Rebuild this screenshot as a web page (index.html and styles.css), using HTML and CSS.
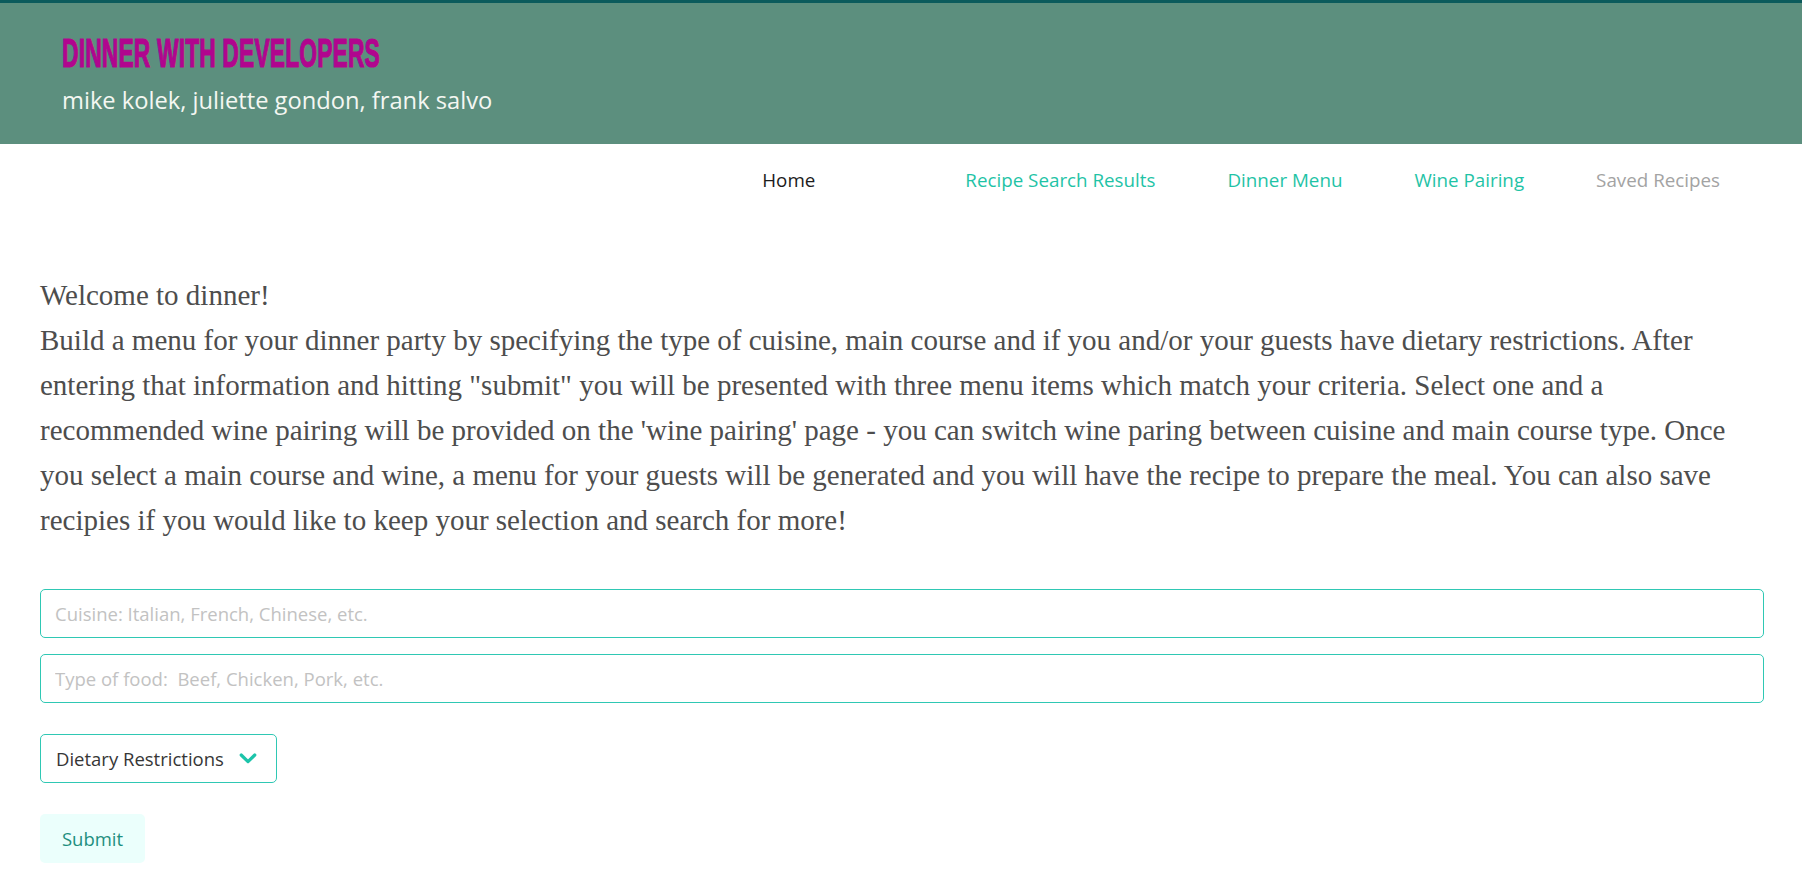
FILE: index.html
```html
<!DOCTYPE html>
<html lang="en">
<head>
<meta charset="utf-8">
<title>Dinner with Developers</title>
<link rel="stylesheet" href="styles.css">
</head>
<body>
<header class="hero">
  <h1 class="title"><span class="title-text">DINNER WITH DEVELOPERS</span></h1>
  <p class="subtitle">mike kolek, juliette gondon, frank salvo</p>
</header>
<nav class="navbar">
  <a class="nav-item nav-home" href="#">Home</a>
  <a class="nav-item nav-link" href="#">Recipe Search Results</a>
  <a class="nav-item nav-link" href="#">Dinner Menu</a>
  <a class="nav-item nav-link" href="#">Wine Pairing</a>
  <a class="nav-item nav-muted" href="#">Saved Recipes</a>
</nav>
<main class="content">
  <p class="intro">Welcome to dinner!<br>Build a menu for your dinner party by specifying the type of cuisine, main course and if you and/or your guests have dietary restrictions. After<br>entering that information and hitting "submit" you will be presented with three menu items which match your criteria. Select one and a<br>recommended wine pairing will be provided on the 'wine pairing' page - you can switch wine paring between cuisine and main course type. Once<br>you select a main course and wine, a menu for your guests will be generated and you will have the recipe to prepare the meal. You can also save<br>recipies if you would like to keep your selection and search for more!</p>
  <form class="search-form">
    <div class="fields">
      <input class="input" type="text" placeholder="Cuisine: Italian, French, Chinese, etc.">
      <input class="input" type="text" placeholder="Type of food:  Beef, Chicken, Pork, etc.">
    </div>
    <div class="dropdown">
      <button class="dropdown-button" type="button">
        <span class="dropdown-label">Dietary Restrictions</span>
        <svg class="chevron" width="18" height="11" viewBox="0 0 18 11" aria-hidden="true"><polyline points="2.2,2 9,8.6 15.8,2" fill="none" stroke="#1cc4aa" stroke-width="3.2" stroke-linecap="round" stroke-linejoin="round"/></svg>
      </button>
    </div>
    <div class="actions">
      <button class="submit" type="button">Submit</button>
    </div>
  </form>
</main>
</body>
</html>
```
FILE: styles.css
```css
html, body {
  margin: 0;
  padding: 0;
  background: #ffffff;
}

body {
  font-family: "Open Sans", "Noto Sans", sans-serif;
  color: #4a4a4a;
}

.hero {
  box-sizing: border-box;
  height: 144px;
  background: #5c8f7e;
  border-top: 3px solid #0b5b5c;
  padding: 31px 62px 0;
}

.title {
  margin: 0;
  height: 38px;
  font-family: "Liberation Sans", Arial, sans-serif;
  font-weight: 700;
  font-size: 40px;
  line-height: 38px;
  color: #b1058e;
  white-space: nowrap;
}

.title-text {
  display: inline-block;
  transform: scaleX(0.57);
  transform-origin: left center;
  -webkit-text-stroke: 1.2px #b1058e;
  letter-spacing: 0.3px;
}

.subtitle {
  margin: 17px 0 0;
  font-size: 23.7px;
  line-height: 1;
  color: #f4f7f2;
}

.navbar {
  display: flex;
  justify-content: flex-end;
  padding: 22px 46px 0 0;
  height: 28px;
}

.nav-item {
  font-size: 18.8px;
  line-height: 28px;
  text-decoration: none;
  padding: 0 36px;
  white-space: nowrap;
}

.nav-home {
  color: #1c1c1c;
  margin-right: 78px;
}

.nav-link {
  color: #1fc3a6;
}

.nav-muted {
  color: #a3a3a3;
}

.content {
  padding: 79px 38px 0 40px;
}

.intro {
  margin: 0;
  font-family: "Liberation Serif", "Times New Roman", serif;
  font-size: 29px;
  line-height: 45px;
  color: #4d4d4d;
  white-space: nowrap;
}

.search-form {
  margin-top: 46px;
}

.fields {
  display: flex;
  flex-direction: column;
  gap: 16px;
}

.input {
  box-sizing: border-box;
  width: 100%;
  height: 49px;
  padding: 0 14px;
  border: 1px solid #2fc8b4;
  border-radius: 5px;
  font-family: "Open Sans", "Noto Sans", sans-serif;
  font-size: 18.5px;
  color: #363636;
  background: #fff;
  outline: none;
}

.input::placeholder {
  color: #c2c2c2;
}

.dropdown {
  margin-top: 31px;
}

.dropdown-button {
  box-sizing: border-box;
  display: inline-flex;
  align-items: center;
  gap: 15px;
  height: 49px;
  padding: 0 19px 0 15px;
  border: 1px solid #2fc8b4;
  border-radius: 5px;
  background: #fff;
  font-family: "Open Sans", "Noto Sans", sans-serif;
  font-size: 18.5px;
  color: #363636;
  white-space: nowrap;
  cursor: pointer;
}

.dropdown-label {
  white-space: nowrap;
}

.chevron {
  display: block;
  flex: none;
}

.actions {
  margin-top: 31px;
}

.submit {
  box-sizing: border-box;
  width: 105px;
  height: 49px;
  border: none;
  border-radius: 5px;
  background: #ebfffc;
  color: #1f8f7f;
  font-family: "Open Sans", "Noto Sans", sans-serif;
  font-size: 18.5px;
  padding: 0;
  cursor: pointer;
}
```
